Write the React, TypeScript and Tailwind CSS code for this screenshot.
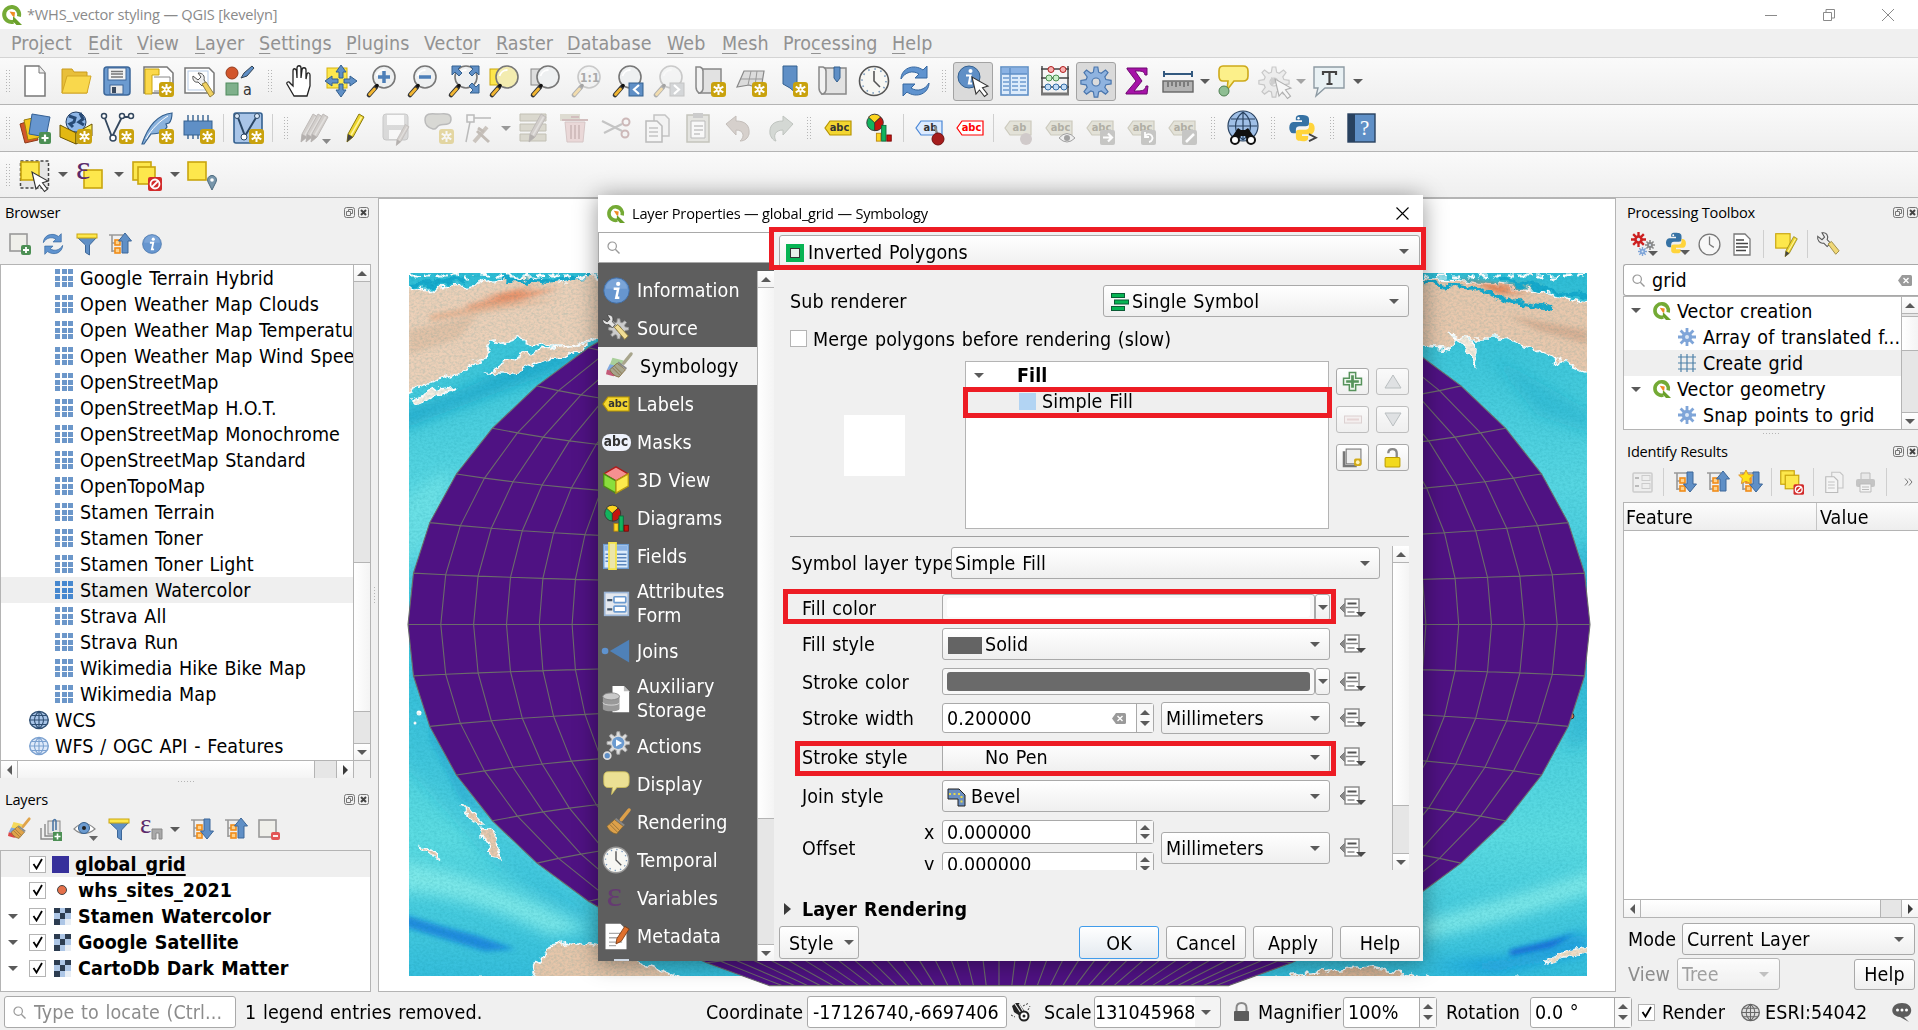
import React from "react";

type Kids = { children?: React.ReactNode };

/* ---------- icon primitives ---------- */

function Svg({ children, s = "size-8", vb = "0 0 32 32" }: Kids & { s?: string; vb?: string }) {
  return (
    <svg viewBox={vb} className={`${s} shrink-0 overflow-visible`} fill="none">
      {children}
    </svg>
  );
}

const NewBadge = ({ x = 17, y = 17 }: { x?: number; y?: number }) => (
  <g transform={`translate(${x} ${y})`}>
    <rect width="15" height="15" rx="3" fill="#c9a20e" />
    <path d="M7.5 2v11M2.7 4.7l9.6 5.6M12.3 4.7l-9.6 5.6" stroke="#fff" strokeWidth="2" />
    <circle cx="7.5" cy="7.5" r="2.4" fill="#fff" />
    <circle cx="7.5" cy="7.5" r="1" fill="#c9a20e" />
  </g>
);
const Cursor = ({ x = 14, y = 12 }: { x?: number; y?: number }) => (
  <path transform={`translate(${x} ${y})`} d="M0 0l4 17 3.5-4 5 6.5 3-2.4-5-6.3 5.5-1.8z" fill="#fff" stroke="#333" strokeWidth="1.1" />
);
const Lens = ({ gray = false, tint = "#eef0f1" }: { gray?: boolean; tint?: string }) => (
  <g opacity={gray ? 0.35 : 1}>
    <path d="M10 22l-7 8" stroke="#333" strokeWidth="4.6" strokeLinecap="round" />
    <path d="M8.5 24l-5 5.500" stroke="#f2b632" strokeWidth="2.8" strokeLinecap="round" />
    <circle cx="18" cy="12" r="11" fill={tint} stroke="#777" strokeWidth="1.6" />
    <path d="M10.5 11a8 8 0 0 1 8-6" stroke="#fff" strokeWidth="1.8" />
    <circle cx="11" cy="20.500" r="1.800" fill="#111" />
  </g>
);

const gearPath =
  "M14.2 2h3.6l.8 5.200 2.600 1.100 4.300-3.200 2.500 2.500-3.200 4.300 1.100 2.600 5.200.8v3.600l-5.200.8-1.100 2.600 3.200 4.300-2.500 2.500-4.300-3.200-2.600 1.100-.8 5.200h-3.600l-.8-5.200-2.600-1.100-4.300 3.200L4 26.700l3.200-4.300-1.100-2.600L.9 19v-3.600l5.200-.8L7.200 12 4 7.600l2.500-2.500 4.300 3.200 2.600-1.100z";

const Gear = ({ fill = "#8fb3df", stroke = "#4a76ad", hole = "#dcdcdc" }) => (
  <>
    <path d={gearPath} fill={fill} stroke={stroke} strokeWidth="1.2" />
    <circle cx="16" cy="17" r="4" fill={hole} stroke={stroke} strokeWidth="1.2" />
  </>
);
const Spiky = ({ fill = "#7fa5d8", s = "size-[18px]" }) => (
  <Svg s={s} vb="0 0 18 18">
    <g stroke={fill} strokeWidth="2.8">
      <path d="M9 0v18M0 9h18M2.6 2.6l12.8 12.8M15.4 2.6L2.6 15.4" />
    </g>
    <circle cx="9" cy="9" r="5.2" fill={fill} />
    <circle cx="9" cy="9" r="2" fill="#dce8f6" />
  </Svg>
);

const QLogo = ({ s = "size-5" }) => (
  <Svg s={s} vb="0 0 20 20">
    <path d="M11.500 16.800A7.500 7.500 0 1 1 16.900 11.500" stroke="#74aa35" strokeWidth="4" />
    <path d="M11 11l9 9h-5.500l-3.500-3.500z" fill="#6aa02a" />
    <path d="M7.500 6.500l5.500.8-.6 5-2-1.500z" fill="#f08a24" />
  </Svg>
);
const Tag = ({ fill = "#f3d631", stroke = "#b79500", color = "#333", text = "abc" }) => (
  <span className="relative flex h-4 w-7 shrink-0 items-center justify-center">
    <svg viewBox="0 0 28 16" className="absolute inset-0 h-full w-full" preserveAspectRatio="none">
      <path d="M6 1h21v14H6L1 8z" fill={fill} stroke={stroke} strokeWidth="1.2" />
    </svg>
    <span className="relative pb-px pl-1 text-[11px] leading-none font-bold tracking-normal" style={{ color }}>{text}</span>
  </span>
);
const Yellow = ({ x = 3, y = 3, w = 18 }) => <rect x={x} y={y} width={w} height={w} fill="#fde74c" stroke="#c9a50e" strokeWidth="1.6" />;
const Refresh = ({ s = "size-8" }) => (
  <Svg s={s}>
    <path d="M2 14C2 4 14-2 24 5l4-4v12H16l4-4C14 5 6 7 2 14z" fill="#5f93cf" stroke="#3567a0" />
    <path d="M30 18C30 28 18 34 8 27l-4 4V19h12l-4 4c6 4 14 2 18-5z" fill="#5f93cf" stroke="#3567a0" />
  </Svg>
);
const Clock = ({ s = "size-8", dark = true }) => (
  <Svg s={s}>
    <circle cx="16" cy="16" r="14.500" fill="#f7f7f3" stroke={dark ? "#555" : "#999"} strokeWidth="1.6" />
    <circle cx="16" cy="16" r="12" stroke="#7899bd" strokeWidth="1.6" strokeDasharray="1.500 4.780" />
    <path d="M16 6v10l6 6" stroke="#555" strokeWidth="1.6" />
  </Svg>
);
const Funnel = () => (
  <Svg s="size-[22px]" vb="0 0 22 22">
    <path d="M1 4h20l-7.5 8v10l-4-2.500v-7.500z" fill="#5f8fc6" stroke="#3c6799" />
    <rect x="1" y="1" width="20" height="4" fill="#fde74c" stroke="#c9a50e" />
  </Svg>
);
const TreeArrow = ({ up = false, star = false }) => (
  <Svg s="size-[24px]" vb="0 0 24 24">
    <path d="M1 3h14M4 3v17M4 11h4M4 19h4" stroke="#999" strokeWidth="1.6" />
    <rect x="7" y="8" width="5" height="5" fill="#ffd28a" stroke="#f08c1a" strokeWidth="1.6" />
    <rect x="7" y="16" width="5" height="5" fill="#ffd28a" stroke="#f08c1a" strokeWidth="1.6" />
    <path d={up ? "M17 1l6.500 8h-3.500v12h-6V9h-3.500z" : "M17 22l6.500-8h-3.500V2h-6v12h-3.500z"} fill="#5f8fc6" stroke="#3c6799" />
    {star && <path d="M7 0l2.3 4.500 5 .6-3.600 3.500.9 5L7 11.300l-4.600 2.300.9-5L-.3 5.100l5-.6z" fill="#ffe11a" stroke="#e0962a" />}
  </Svg>
);
const Info = ({ s = "size-6" }) => (
  <Svg s={s} vb="0 0 24 24">
    <circle cx="12" cy="12" r="11.300" fill="#6796cf" stroke="#3f6ca3" strokeWidth=".8" />
    <path d="M2.500 10.500a9.500 9 0 0 1 19 0z" fill="#8fb4e2" opacity=".5" />
    <circle cx="13.5" cy="6.2" r="1.900" fill="#fff" />
    <path d="M9.5 10.5h4L11.800 18.5h2.700" stroke="#fff" strokeWidth="2.2" />
  </Svg>
);
const Pencil = ({ gray = false, x = 0 }: { gray?: boolean; x?: number }) => (
  <g transform={`translate(${x} 0)`}>
    <path d="M8 22L19 2l5 3-11 20-6 5z" fill={gray ? "#d2cecb" : "#ecd52e"} stroke={gray ? "#bfbbb9" : "#8b7a12"} />
    <path d="M8 22l5 3-6 5z" fill={gray ? "#b4b0ae" : "#444"} />
    <path d="M11 23L21.5 5" stroke={gray ? "#e2e0de" : "#fff3a0"} strokeWidth="1.5" />
  </g>
);
const Python = ({ s = "size-8", prompt = false }: { s?: string; prompt?: boolean }) => (
  <Svg s={s}>
    <path d="M15 1c-7 0-6 3-6 6h7v2H6c-6 0-6 13 0 13h3v-4c0-3 2-4 4-4h7c3 0 4-1 4-4V6c0-4-3-5-9-5z" fill="#3672a4" />
    <path d="M17 31c7 0 6-3 6-6h-7v-2h10c6 0 6-13 0-13h-2v4c0 3-2 4-4 4h-7c-3 0-4 1-4 4v4c0 4 2 5 8 5z" fill="#ffd43b" />
    <circle cx="12" cy="4.800" r="1.4" fill="#fff" />
    {prompt && <path d="M24 23l8 4-8 4" stroke="#444" strokeWidth="2" fill="none" />}
  </Svg>
);
const Diagram = ({ s = "size-8" }) => (
  <Svg s={s}>
    <circle cx="11" cy="10" r="9" fill="#12b35e" stroke="#333" />
    <path d="M11 10L4 3.5a9 9 0 0 1 14 0z" fill="#fcd520" stroke="#333" />
    <path d="M11 10l7-6.5A9 9 0 0 1 11 19z" fill="#c4150e" stroke="#333" />
    <rect x="13" y="22" width="5" height="9" fill="#fcd520" stroke="#b8860b" />
    <rect x="19" y="13" width="5" height="18" fill="#12b35e" stroke="#0a6636" />
    <rect x="25" y="24" width="5" height="7" fill="#c4150e" stroke="#700" />
  </Svg>
);
const Globe = ({ s = "size-[20px]", fill = "#a9c5e8", stroke = "#2f4f73" }) => (
  <Svg s={s} vb="0 0 20 20">
    <ellipse cx="10" cy="10" rx="9.3" ry="8.5" fill={fill} stroke={stroke} strokeWidth="1.4" />
    <path d="M10 1.5v17M1 10h18M3 5.5h14M3 14.5h14M10 1.5c-6 5-6 12 0 17M10 1.5c6 5 6 12 0 17" stroke={stroke} strokeWidth="1.1" />
  </Svg>
);
const SearchIcon = () => (
  <Svg s="size-[13px]" vb="0 0 13 13">
    <circle cx="5.2" cy="5.2" r="4.2" stroke="#999" strokeWidth="1.2" />
    <path d="M8.3 8.3l4.2 4.2" stroke="#999" strokeWidth="1.4" />
  </Svg>
);
const ClearX = () => (
  <Svg s="h-[11px] w-[14px]" vb="0 0 14 11">
    <path d="M4 0h8.500q1.500 0 1.500 1.500v8q0 1.500-1.500 1.500H4L0 5.500z" fill="#9a9a9a" />
    <path d="M5.5 3l5 5M10.5 3l-5 5" stroke="#fff" strokeWidth="1.4" />
  </Svg>
);
const Brush = ({ s = "size-7", wood = "#e0a44a", patch = true }) => (
  <Svg s={s} vb="0 0 28 28">
    {patch && (
      <>
        <path d="M7 5l12 3-4 8-11-3z" fill={wood === "#e0a44a" ? "#f5d85a" : "#a9cf9a"} />
        <path d="M4 12l8 2-3 6-8-2z" fill="#7fa8e0" />
        <path d="M1 18l9 2 6 3-8 2-8-2z" fill={wood === "#e0a44a" ? "#dd4646" : "#c45a78"} />
      </>
    )}
    <path d="M27 1l-8 10" stroke={wood} strokeWidth="3.600" strokeLinecap="round" />
    <path d="M12 11l9 7-7 8c-5-1-8-4-10-8z" fill={wood} stroke="#7c6334" strokeWidth=".8" />
    <path d="M9 14l8 8M7 16l8 8" stroke="#7c6334" strokeWidth=".7" />
    <path d="M13 10l9 7" stroke="#888" strokeWidth="2" />
  </Svg>
);
const Wrench = ({ s = "size-7" }) => (
  <Svg s={s} vb="0 0 28 28">
    <path d="M2 5l5 4 3-3-3-5c5-1 8 3 6 8l4 4-4 4-4-4C5 14 1 10 2 5z" fill="#eee" stroke="#555" strokeWidth="1.2" />
    <path d="M14 14l4-3 9 11-4 4z" fill="#f0d878" stroke="#94823d" />
  </Svg>
);

const ic = {
  newFile: <Svg><path d="M6 1h14l6 7v23H6z" fill="#fff" stroke="#777" strokeWidth="1.5" /><path d="M20 1v7h6" stroke="#777" fill="#eee" /></Svg>,
  open: <Svg><path d="M2 4h10l2 3h13v21H2z" fill="#e8bf3a" stroke="#c99b1c" /><path d="M7 11h24l-4 17H2z" fill="#f9d84c" stroke="#d3a724" /></Svg>,
  save: <Svg><rect x="3" y="2" width="26" height="28" rx="3" fill="#6c9bd0" stroke="#3c6799" strokeWidth="1.5" /><rect x="7" y="3" width="18" height="12" fill="#f4f4f4" stroke="#3c6799" /><path d="M10 6.5h12M10 9h12M10 12h12" stroke="#777" strokeWidth="1.4" /><rect x="9" y="20" width="13" height="9" fill="#e8e8e8" stroke="#3c6799" /><rect x="11" y="22" width="4" height="6" fill="#3a4a60" /></Svg>,
  layout: <Svg><path d="M2 2h23l6 6v20H2z" fill="#fff" stroke="#777" strokeWidth="1.5" /><path d="M3 4h14v6H10v19H3z" fill="#fbd84b" stroke="#c9a50e" /><path d="M12 12h16v14H12" stroke="#888" /><NewBadge /></Svg>,
  wrenchDoc: <Svg><path d="M2 3h24l5 5v20H2z" fill="#fff" stroke="#777" strokeWidth="1.5" /><rect x="5" y="6" width="20" height="19" stroke="#b7cbe6" /><g transform="translate(8 6)"><path d="M2 5l5 4 3-3-3-4c5 0 7 3 6 7l2 3-4 3-4-4C4 12 1 9 2 5z" fill="#eee" stroke="#555" /><path d="M11 13l4-2 8 12-4 3z" fill="#f0d060" stroke="#94823d" /></g></Svg>,
  styleMgr: <Svg><circle cx="8" cy="8" r="6" fill="#d2562c" stroke="#963b1b" /><path d="M17 13l3-5 8-7 2 2-7 8z" fill="#5f8fc6" stroke="#345" /><rect x="2" y="18" width="12" height="12" fill="#7fb08b" stroke="#4f8a5c" /><text x="19" y="30" fontSize="16" fill="#333">a</text></Svg>,
  hand: <Svg><path d="M10 31L3 19c-1-2 2-3 3-1l3 3V6c0-3 3-3 3.5 0l.5 7V3c0-3 4-3 4 0v10l1-8c0-3 4-3 4 0v9l1-5c1-2 3-1 3 1v11l-3 10z" fill="#fff" stroke="#222" strokeWidth="1.3" /></Svg>,
  panSel: <Svg><rect x="2" y="3" width="20" height="20" fill="#fde74c" stroke="#d6b20e" /><g fill="#5f8fc6" stroke="#34608f"><path d="M16 0l5 7h-3v6h-4V7h-3zM16 32l5-7h-3v-6h-4v6h-3zM0 16l7-5v3h6v4H7v3zM32 16l-7-5v3h-6v4h6v3z" /></g></Svg>,
  zoomIn: <Svg><Lens /><path d="M18 6v12M12 12h12" stroke="#4d7fb8" strokeWidth="3.5" /></Svg>,
  zoomOut: <Svg><Lens /><path d="M12 12h12" stroke="#4d7fb8" strokeWidth="3.5" /></Svg>,
  zoomFull: <Svg><Lens /><path d="M4 1h9l-3 3 4 4-3 3-4-4-3 3zM31 1h-9l3 3-4 4 3 3 4-4 3 3zM31 28h-9l3-3-4-4 3-3 4 4 3-3z" fill="#5f8fc6" stroke="#34608f" /></Svg>,
  zoomSel: <Svg><rect x="1" y="4" width="16" height="16" fill="#fde74c" stroke="#c9a50e" /><Lens tint="#f3ecb0" /></Svg>,
  zoomLayer: <Svg><rect x="1" y="4" width="16" height="16" fill="#ddd" stroke="#888" /><Lens /></Svg>,
  zoom11: <Svg><Lens gray /><text x="9" y="17" fontSize="12" fontWeight="bold" fill="#aaa">1:1</text></Svg>,
  zoomPrev: <Svg><Lens /><rect x="17" y="18" width="14" height="13" fill="#5f8fc6" stroke="#34608f" /><path d="M27 20l-5 4.500 5 4.500" stroke="#fff" strokeWidth="2.2" /></Svg>,
  zoomNext: <Svg><Lens gray /><rect x="17" y="18" width="14" height="13" fill="#d4d6d8" stroke="#c4c4c4" /><path d="M21 20l5 4.500-5 4.500" stroke="#fff" strokeWidth="2.2" /></Svg>,
  newMap: <Svg><path d="M8 4h19v24H4q3-1 3-4z" fill="#e2e2e2" stroke="#888" strokeWidth="1.5" /><path d="M2 2h4q3 1 3 4v18q-1 4-4 4-3-2-3-6z" fill="#f2f2f2" stroke="#888" strokeWidth="1.5" /><NewBadge /></Svg>,
  new3d: <Svg><path d="M2 22L9 6h20l-3 18-12-4z" fill="#dcdcdc" stroke="#888" strokeWidth="1.2" /><path d="M6 14h21M16 6l-3 14M22 6l-2 15" stroke="#999" /><NewBadge /></Svg>,
  bookmarkNew: <Svg><path d="M7 1h14v28l-7-6-7-4z" fill="#5f8fc6" stroke="#34608f" /><NewBadge /></Svg>,
  bookmarks: <Svg><path d="M8 3h21v26H4q3-1 3-4z" fill="#e2e2e2" stroke="#888" strokeWidth="1.5" /><path d="M2 2h4q3 1 3 4v19q-1 4-4 4-3-2-3-6z" fill="#f2f2f2" stroke="#888" strokeWidth="1.5" /><path d="M17 2h6v11l-3 4-3-4z" fill="#5f8fc6" stroke="#34608f" /></Svg>,
  clock: <Clock />,
  refresh: <Refresh />,
  identify: <Svg><circle cx="12" cy="12" r="11" fill="#5f8fc6" stroke="#34608f" /><circle cx="13.5" cy="6" r="2" fill="#fff" /><path d="M9 10.5h4.5L12 18.5h3" stroke="#fff" strokeWidth="2.2" /><Cursor x={15} y={12} /></Svg>,
  table: <Svg><rect x="3" y="2" width="27" height="28" fill="#dcebfb" stroke="#5f8fc6" strokeWidth="1.6" /><rect x="4" y="3" width="25" height="6" fill="#8ab2e4" /><path d="M4 9h25M12 3v26" stroke="#5f8fc6" strokeWidth="1.4" /><path d="M5 13h6M5 17h6M5 21h6M5 25h6M14 13h6M14 17h6M14 21h6M14 25h6M22 13h6M22 17h6M22 21h6M22 25h6" stroke="#6c9bd0" strokeWidth="1.6" /></Svg>,
  calc: <Svg><path d="M3 1v28M29 1v28M2 4h28M2 13h28M2 22h28" stroke="#444" strokeWidth="1.4" /><path d="M2 29h28" stroke="#777" strokeWidth="3" /><g stroke="#b02020" fill="#f9b0b0"><circle cx="12" cy="4.5" r="3" /><circle cx="24" cy="4.5" r="3" /></g><g stroke="#4c9050" fill="#c9f0c9"><circle cx="10" cy="13" r="3" /><circle cx="17" cy="13" r="3" /></g><g stroke="#346fa8" fill="#c3dcf5"><circle cx="9" cy="22" r="3" /><circle cx="17" cy="22" r="3" /><circle cx="25" cy="22" r="3" /></g></Svg>,
  gear: <Svg><Gear /></Svg>,
  sigma: <Svg><path d="M6 3h20v7h-2c-1-4-3-4-10-4l7 10-8 10c8 0 11 0 12-5h2l-1 8H5v-1l10-12L6 4z" fill="#a612a8" stroke="#6e0b70" /></Svg>,
  measure: <Svg><path d="M2 9h28M2 6v6M30 6v6" stroke="#33597f" strokeWidth="2" /><rect x="1" y="16" width="30" height="11" fill="#b4b4b4" stroke="#666" strokeWidth="1.4" /><path d="M6 17v5M10 17v4M14 17v5M18 17v4M22 17v5M26 17v4" stroke="#444" /></Svg>,
  tips: <Svg><path d="M6 1h20q5 0 5 5v5q0 5-5 5h-9l-7 9 1-9H6q-4 0-4-5V6q0-5 4-5z" fill="#fcf08a" stroke="#cda91a" strokeWidth="1.6" /><circle cx="7" cy="26" r="5" fill="#8fbe93" stroke="#4d7f50" /></Svg>,
  gearOff: <Svg><g opacity=".35"><Gear fill="#ddd" stroke="#777" hole="#eee" /><path d="M13 12l8 4-8 5z" fill="#888" /><Cursor x={17} y={14} /></g></Svg>,
  textAnn: <Svg><path d="M1 2h30v21H12l-9 8 2-8H1z" fill="#e9f1f4" stroke="#8d9aa3" strokeWidth="1.4" /><path d="M10 10V7h13v3M16.5 7v12M13.500 19h6" stroke="#444" strokeWidth="2.2" /></Svg>,

  dsm: <Svg><path d="M1 12l12-4 6 20-13 3z" fill="#d2562c" stroke="#8e3a17" /><path d="M5 8l13-3 5 20-14 3z" fill="#f3c71d" stroke="#9b7e0c" /><path d="M13 2l18 3-4 20-17-3z" fill="#6796cf" stroke="#335f94" /><rect x="20" y="20" width="12" height="12" rx="2" fill="#4c8f54" /><path d="M26 22.5v7M22.5 26h7" stroke="#fff" strokeWidth="2.2" /></Svg>,
  gpkg: <Svg><circle cx="16" cy="10" r="10" fill="#8fb7e8" stroke="#1f3c63" /><path d="M9 4l6 2-1 4-4 2 3 3M20 1l3 6-4 3 5 3" stroke="#274a75" strokeWidth="3" /><path d="M0 13l16 8v11L0 25z" fill="#e3b813" stroke="#6d5500" /><path d="M32 12l-16 9v11l16-8z" fill="#fcee57" stroke="#6d5500" /><NewBadge /></Svg>,
  shp: <Svg><path d="M3 4l8 21 10-20h10" stroke="#33475e" strokeWidth="1.8" /><g fill="#fff" stroke="#33475e" strokeWidth="1.5"><circle cx="3" cy="4" r="2.5" /><circle cx="12" cy="26" r="3" /><circle cx="21" cy="4" r="2.5" /><circle cx="30" cy="4" r="2.5" /></g><NewBadge x={18} /></Svg>,
  feather: <Svg><path d="M0 32C4 20 12 3 30 1c0 6-1 8-3 10l-3 1 1 3c-2 4-8 7-16 7L2 32z" fill="#8ab2dd" stroke="#34608f" strokeWidth="1.2" /><path d="M4 27C10 16 18 9 26 4" stroke="#fff" /><NewBadge /></Svg>,
  chip: <Svg><path d="M5 3v24M10 3v24M15 3v24M20 3v24M25 3v24" stroke="#34608f" strokeWidth="1.4" /><rect x="1" y="9" width="28" height="14" fill="#5f8fc6" stroke="#34608f" /><NewBadge /></Svg>,
  mesh: <Svg><rect x="2" y="1" width="28" height="30" rx="2" fill="#a9c5e8" stroke="#34608f" strokeWidth="1.6" /><path d="M5 3l8 21 12-20" stroke="#2b4766" strokeWidth="2" /><circle cx="5" cy="4" r="2.5" fill="#dbe9f8" stroke="#2b4766" /><circle cx="25" cy="4" r="2.5" fill="#dbe9f8" stroke="#2b4766" /><circle cx="12" cy="25" r="3" fill="#fff" stroke="#2b4766" /><NewBadge /></Svg>,
  pencils: <Svg><Pencil gray x={-5} /><Pencil gray x={0} /><Pencil gray x={5} /><path d="M23 27h9l-4.500 5z" fill="#888" /></Svg>,
  pencil: <Svg><Pencil /></Svg>,
  saveOff: <Svg><g opacity=".35"><rect x="2" y="2" width="25" height="26" rx="3" fill="#aaa" stroke="#777" /><rect x="6" y="3" width="17" height="10" fill="#fff" /><rect x="8" y="18" width="12" height="9" fill="#fff" /></g><g transform="translate(10 11) scale(.75)"><Pencil gray /></g></Svg>,
  polyOff: <Svg><path d="M3 8c0-8 8-6 13-6s13-2 13 5-7 5-11 6-3 5-7 4-8-4-8-9z" fill="#d8d8d4" stroke="#bbb" strokeWidth="1.5" /><g opacity=".35"><NewBadge /></g></Svg>,
  vertexOff: <Svg><path d="M4 3h7v7H4zM11 6h17M7 10L3 30" stroke="#bbb" strokeWidth="1.5" /><path d="M11 30L24 15" stroke="#cbc5bf" strokeWidth="4" /><path d="M14 19l12 11M15 16l6 4" stroke="#c2bcb6" strokeWidth="3" /></Svg>,
  multiOff: <Svg><path d="M2 2h26v7H2zM2 12h26v7H2zM2 22h26v7H2z" fill="#dad8ce" stroke="#c2c0b4" /><Pencil gray x={4} /></Svg>,
  trash: <Svg><path d="M1 2h20v7H1z" fill="#dedcd2" /><path d="M6 10h20l-2 20H8z" fill="#ead8d8" stroke="#d6c6c6" /><path d="M3 8h26M12 5h8M12 13v14M16 13v14M20 13v14" stroke="#d2bebe" strokeWidth="2" /></Svg>,
  cut: <Svg><path d="M2 9l20 10M4 21l18-9" stroke="#c4c4c4" strokeWidth="2.2" /><circle cx="26" cy="10" r="3.5" stroke="#ccb8b8" strokeWidth="2" /><circle cx="25" cy="22" r="3.5" stroke="#ccb8b8" strokeWidth="2" /></Svg>,
  copy: <Svg><path d="M13 3h11l4 4v17H13z" fill="#f2f2f2" stroke="#c4c4c4" strokeWidth="1.5" /><path d="M5 9h11l5 5v16H5z" fill="#f5f5f5" stroke="#bbb" strokeWidth="1.5" /><path d="M8 16h9M8 20h9M8 24h9" stroke="#c4c4c4" strokeWidth="1.6" /></Svg>,
  paste: <Svg><rect x="5" y="3" width="22" height="27" fill="#e4e4e0" stroke="#c4c4bc" strokeWidth="1.5" /><rect x="11" y="1" width="10" height="5" fill="#ccc" /><path d="M9 9h14v17H9z" fill="#f8f8f8" stroke="#bbb" /><path d="M12 14h9M12 18h9M12 22h6" stroke="#c4c4c4" strokeWidth="1.6" /></Svg>,
  undo: <Svg><path d="M3 12l10-8v5c9 0 14 4 13 13-1 4-4 7-9 7 5-4 4-11-4-11v5z" fill="#d6d0cc" stroke="#c4beba" /></Svg>,
  redo: <Svg><path d="M29 12L19 4v5C10 9 5 13 6 22c1 4 4 7 6 7-3-5-1-11 7-11v5z" fill="#d4d8d4" stroke="#bfc4bf" /></Svg>,
  tag: <Tag />,
  diagram: <Diagram s="size-7" />,
  tagPin: <span className="relative"><Tag fill="#dcebff" stroke="#4a87d6" text="ab" /><svg viewBox="0 0 14 22" className="absolute top-1 left-4 h-[22px] w-[14px]"><path d="M7 14L4 2" stroke="#888" strokeWidth="2.5" /><circle cx="7" cy="15" r="6" fill="#a51c1c" stroke="#701010" /></svg></span>,
  tagRed: <Tag fill="#fff" stroke="#f00" color="#f00" />,
  metasearch: <Svg><circle cx="16" cy="14" r="15" fill="#9fbfe6" stroke="#28415f" strokeWidth="1.2" /><path d="M16 0v28M2 14h28M4 7h24M16 0C6 8 6 20 16 28M16 0c10 8 10 20 0 28" stroke="#28415f" strokeWidth="1.2" /><path d="M11 16l3 2h4l3-2 8 12-7 2-4-6h-4l-4 6-7-2z" fill="#111" /><circle cx="8" cy="28" r="4" fill="#fff" stroke="#111" strokeWidth="2" /><circle cx="24" cy="28" r="4" fill="#fff" stroke="#111" strokeWidth="2" /></Svg>,
  help: <Svg><rect x="3" y="2" width="27" height="28" fill="#5f8fc6" stroke="#28415f" strokeWidth="1.4" /><rect x="3" y="2" width="7" height="28" fill="#28415f" /><text x="15" y="23" fontSize="21" fill="#fff" fontFamily="Liberation Serif">?</text></Svg>,

  select: <Svg><rect x="1.5" y="2" width="28" height="27" fill="#e6e6e6" stroke="#444" strokeWidth="1.5" strokeDasharray="3 2" /><Yellow x={2} y={3} w={18} /><Cursor x={13} y={13} /></Svg>,
  selExpr: <Svg><Yellow x={9} y={11} w={18} /><text x="1" y="20" fontSize="34" fill="#5b2a6b" fontFamily="Liberation Serif">ε</text></Svg>,
  deselect: <Svg><Yellow x={2} y={3} w={18} /><Yellow x={7} y={8} w={17} /><rect x="17" y="18" width="14" height="14" rx="2" fill="#d22b2b" /><circle cx="24" cy="25" r="4.5" stroke="#fff" strokeWidth="1.8" /><path d="M21 28l6-6" stroke="#fff" strokeWidth="1.8" /></Svg>,
  selLoc: <Svg><Yellow x={1} y={3} w={18} /><path d="M25 31l-4-8a4.5 4.5 0 1 1 8 0z" fill="#7896ab" stroke="#4d6b80" /><circle cx="25" cy="21" r="1.8" fill="#fff" /></Svg>,
};

const GrayTag = ({ kind }: { kind: number }) => (
  <span className="relative opacity-90">
    <Tag fill="#e2e1d6" stroke="#c8c6b8" color="#a9a79c" text={kind === 0 ? "ab" : "abc"} />
    <svg viewBox="0 0 16 16" className="absolute top-2.5 left-3.5 size-4" fill="none">
      {kind === 0 && <circle cx="8" cy="9" r="6" fill="#cdc6c6" />}
      {kind === 1 && <path d="M0 8q8-9 16 0-8 8-16 0z" fill="#eee" stroke="#999" />}
      {kind === 1 && <circle cx="8" cy="8" r="3" fill="#999" />}
      {kind > 1 && <rect width="15" height="15" rx="2" fill="#c2c2c0" />}
      {kind === 2 && <path d="M3 7.5h8M8 3.5l4 4-4 4" stroke="#fff" strokeWidth="2.2" />}
      {kind === 3 && <path d="M4 6a4 4 0 1 1 4 6M4 2v5h4" stroke="#fff" strokeWidth="1.8" />}
      {kind === 4 && <path d="M4 12l8-8" stroke="#fff" strokeWidth="2.5" />}
    </svg>
  </span>
);

/* ---------- toolbar parts ---------- */

const Handle = ({ w }: { w: string }) => (
  <div className={`${w} flex shrink-0 items-center justify-center`}>
    <div className="h-6 w-[5px] bg-[radial-gradient(circle,#b5b5b5_0.8px,transparent_1px)] bg-[size:3px_3px]" />
  </div>
);
const Sep = ({ w }: { w: string }) => (
  <div className={`${w} flex shrink-0 justify-center`}>
    <div className="h-7 w-px bg-[#cfcfcf]" />
  </div>
);
const Ico = ({ children, on = false }: Kids & { on?: boolean }) => (
  <div className="flex w-[41px] shrink-0 justify-center">
    <div className={`flex h-[39px] w-10 items-center justify-center ${on ? "rounded-[3px] border border-[#a3a3a3] bg-[#dadada]" : ""}`}>{children}</div>
  </div>
);
const Down = ({ c = "border-t-[#5a5a5a]" }) => <i className={`block h-0 w-0 shrink-0 border-x-[5px] border-t-[5px] border-x-transparent ${c}`} />;
const Up = () => <i className="block h-0 w-0 shrink-0 border-x-[5px] border-b-[5px] border-x-transparent border-b-[#5a5a5a]" />;
const Left = () => <i className="block h-0 w-0 shrink-0 border-y-[5px] border-r-[5px] border-y-transparent border-r-[#5a5a5a]" />;
const Right = ({ big = false }) => <i className={`block h-0 w-0 shrink-0 border-y-transparent border-l-[#3a3a3a] ${big ? "border-y-[6px] border-l-[7px]" : "border-y-[5px] border-l-[5px]"}`} />;
const Drop = ({ w = "w-[14px]", c }: { w?: string; c?: string }) => (
  <div className={`${w} flex shrink-0 justify-center`}><Down c={c} /></div>
);
const bar = "flex shrink-0 items-center border-b border-[#b4b4b4] bg-linear-to-b from-[#fafafa] to-[#efefef]";

/* ---------- docks ---------- */

const DockTitle = ({ children, cls = "" }: Kids & { cls?: string }) => (
  <div className={`flex shrink-0 items-center justify-between font-['Open_Sans'] text-[14.6px] tracking-[-0.2px] [font-stretch:normal] [word-spacing:0] ${cls}`}>
    <span>{children}</span>
    <svg viewBox="0 0 25 11" className="h-[11px] w-[25px]" fill="none" stroke="#777">
      <rect x=".5" y=".5" width="10" height="10" rx="2" />
      <path d="M4.5 4.5V2.5h4v4h-2M2.5 4.5h4v4h-4z" />
      <rect x="14.5" y=".5" width="10" height="10" rx="2" />
      <path d="M17 3l5 5M22 3l-5 5" stroke="#444" strokeWidth="2" />
    </svg>
  </div>
);
const btn = "flex shrink-0 items-center justify-center border-[#b4b4b4] bg-linear-to-b from-white to-[#f3f3f3]";

function VScroll({ thumb, after, track = "h-0" }: { thumb: string; after: string; track?: string }) {
  return (
    <div className="flex w-[17px] shrink-0 flex-col border-l border-[#b4b4b4] bg-[#e6e6e6]">
      <div className={`${btn} h-[17px] border-b`}><Up /></div>
      <div className={track} />
      <div className={`${thumb} shrink-0 border-b border-[#b4b4b4] bg-linear-to-r from-white to-[#f4f4f4]`} />
      <div className={after} />
      <div className={`${btn} h-[17px] border-t`}><Down /></div>
    </div>
  );
}
function HScroll({ gap, corner = true }: { gap: string; corner?: boolean }) {
  return (
    <div className="flex h-[18px] shrink-0 border-t border-[#b4b4b4] bg-[#e6e6e6]">
      <div className={`${btn} w-[17px] border-r`}><Left /></div>
      <div className="grow border-r border-[#b4b4b4] bg-linear-to-b from-white to-[#f4f4f4]" />
      <div className={gap} />
      <div className={`${btn} w-[17px] border-l`}><Right /></div>
      {corner && <div className="w-[17px] border-l border-[#b4b4b4] bg-[#f0f0f0]" />}
    </div>
  );
}

const browserItems = [
  "Google Terrain Hybrid", "Open Weather Map Clouds", "Open Weather Map Temperatu", "Open Weather Map Wind Spee", "OpenStreetMap",
  "OpenStreetMap H.O.T.", "OpenStreetMap Monochrome", "OpenStreetMap Standard", "OpenTopoMap", "Stamen Terrain", "Stamen Toner",
  "Stamen Toner Light", "Stamen Watercolor", "Strava All", "Strava Run", "Wikimedia Hike Bike Map", "Wikimedia Map",
];
const Nine = ({ hot }: { hot: boolean }) => (
  <div className="grid size-[18px] shrink-0 grid-cols-3 gap-[1.5px]">
    {Array.from({ length: 9 }, (_, i) => <i key={i} className={hot ? "bg-[#4788cf]" : "bg-[#6c97ca]"} />)}
  </div>
);
const Check = ({ on = true }) => (
  <div className="flex size-[17px] shrink-0 items-center justify-center border border-[#b4b4b4] bg-white">
    {on && <svg viewBox="0 0 12 12" className="size-3" fill="none"><path d="M1.500 6l3 4.500L10 1" stroke="#000" strokeWidth="1.8" /></svg>}
  </div>
);
const Checker = () => (
  <div className="grid size-[17px] shrink-0 grid-cols-3">
    {["d", "l", "d", "l", "d", "l", "d", "l", "w"].map((c, i) => (
      <i key={i} className={c === "d" ? "bg-[#2c3c50]" : c === "l" ? "bg-[#adc6e6]" : "bg-[#e8eef5]"} />
    ))}
  </div>
);
const DotsH = () => <div className="h-[3px] w-[18px] bg-[radial-gradient(circle,#b5b5b5_0.8px,transparent_1px)] bg-[size:3px_3px]" />;

function LeftDock() {
  return (
    <div className="flex w-[371px] shrink-0 flex-col">
      <DockTitle cls="h-[29px] pl-[5px] pr-[2px]">Browser</DockTitle>
      <div className="mb-[3px] flex h-[34px] shrink-0 items-center gap-[10px] pl-[8px]">
        <Svg s="size-[24px]" vb="0 0 24 24"><rect x="2" y="2" width="17" height="17" fill="#efefea" stroke="#999" strokeWidth="1.6" /><rect x="13" y="13" width="10" height="10" rx="2" fill="#4c8f54" /><path d="M18 15v6M15 18h6" stroke="#fff" strokeWidth="1.8" /></Svg>
        <Refresh s="size-[22px]" /><span className="pl-[2px]"><Funnel /></span><TreeArrow up /><Info s="size-[20px]" />
      </div>
      <div className="flex h-[514px] shrink-0 flex-col border border-[#b4b4b4] bg-white">
        <div className="flex h-[495px] shrink-0">
          <div className="min-w-0 grow overflow-hidden">
            {browserItems.map((t, i) => (
              <div key={t} className={`flex h-[26px] items-center pl-[54px] whitespace-nowrap ${i === 12 ? "bg-[#efefef]" : ""}`}>
                <Nine hot={i === 12} /><span className="pt-[2px] pl-[7px]">{t}</span>
              </div>
            ))}
            <div className="flex h-[26px] items-center gap-[6px] pl-[28px]"><Globe /><span className="pt-[2px]">WCS</span></div>
            <div className="flex h-[26px] items-center gap-[6px] pl-[28px]"><Globe fill="#dfeafa" stroke="#7ba1d0" /><span className="pt-[2px]">WFS / OGC API - Features</span></div>
          </div>
          <VScroll track="h-[281px] border-b border-[#b4b4b4]" thumb="h-[149px]" after="grow" />
        </div>
        <HScroll gap="w-[21px]" />
      </div>
      <div className="flex h-[5px] shrink-0 items-end justify-center"><DotsH /></div>
      <DockTitle cls="mt-[3px] h-[26px] pl-[5px] pr-[2px]">Layers</DockTitle>
      <div className="mb-[4px] flex h-[34px] shrink-0 items-center gap-[10px] pl-[8px]">
        <Brush s="size-[22px]" />
        <Svg s="size-[23px]" vb="0 0 23 23"><path d="M1 10v11h14M5 6v12h12" stroke="#888" strokeWidth="1.4" /><rect x="8" y="3" width="12" height="13" fill="#e5e5e5" stroke="#888" /><path d="M13 13V3q2-3 3 0v9" stroke="#4d77a5" strokeWidth="1.6" /><rect x="13" y="14" width="9" height="9" fill="#4c8f54" /><path d="M17.5 15.5v6M14.5 18.5h6" stroke="#fff" strokeWidth="1.6" /></Svg>
        <Svg s="size-[25px]" vb="0 0 25 25"><path d="M1 12Q11 1 22 12 11 21 1 12z" fill="#fff" stroke="#888" strokeWidth="1.2" /><circle cx="11" cy="11" r="5.5" fill="#6c9bd0" stroke="#34608f" /><circle cx="11" cy="11" r="2" fill="#222" /><path d="M16 19h9l-4.500 5z" fill="#666" /></Svg>
        <Funnel />
        <Svg s="size-[24px]" vb="0 0 24 24"><text x="0" y="16" fontSize="27" fill="#5b2a6b" fontFamily="Liberation Serif">ε</text><path d="M12 22V12h10v10h-3v-6h-3v6z" fill="#a9a9a9" stroke="#888" /></Svg>
        <span className="-ml-1"><Down /></span>
        <span><TreeArrow /></span><TreeArrow up />
        <Svg s="size-[23px]" vb="0 0 23 23"><rect x="1" y="2" width="17" height="17" fill="#efefea" stroke="#999" strokeWidth="1.6" /><rect x="13" y="14" width="9" height="8" rx="2" fill="#e25555" /><path d="M15 18h5" stroke="#fff" strokeWidth="1.8" /></Svg>
      </div>
      <div className="flex h-[142px] shrink-0 flex-col border border-[#b4b4b4] bg-white font-bold">
        <div className="flex h-[26px] shrink-0 items-center bg-[#efefef] pl-[28px]"><Check /><i className="ml-[6px] size-[17px] bg-[#37309b]" /><span className="pt-[2px] pl-[6px]"><span className="underline decoration-2 underline-offset-[3px]">global_grid</span></span></div>
        <div className="flex h-[26px] shrink-0 items-center pl-[28px]"><Check /><i className="mr-[11px] ml-[11px] size-[10px] rounded-full border border-[#444] bg-[#e5704a]" /><span className="pt-[2px]">whs_sites_2021</span></div>
        {["Stamen Watercolor", "Google Satellite", "CartoDb Dark Matter"].map((t) => (
          <div key={t} className="flex h-[26px] shrink-0 items-center"><span className="w-[28px] pl-[7px]"><Down /></span><Check /><span className="pr-[7px] pl-[8px]"><Checker /></span><span className="pt-[2px]">{t}</span></div>
        ))}
      </div>
    </div>
  );
}

const rtool = "flex shrink-0 items-center";
function RightDock() {
  return (
    <div className="flex w-[295px] shrink-0 flex-col">
      <DockTitle cls="h-[29px] pl-[4px]">Processing Toolbox</DockTitle>
      <div className={`${rtool} mb-[3px] h-[34px] pl-[8px]`}>
        <span className="relative size-[25px]">
          <span className="absolute top-0 left-0"><Spiky fill="#cc2020" s="size-[15px]" /></span>
          <span className="absolute top-[8px] left-[14px]"><Spiky fill="#888" s="size-[10px]" /></span>
          <span className="absolute top-[15px] left-[7px]"><Spiky s="size-[9px]" /></span>
          <span className="absolute top-[19px] left-[17px]"><Down /></span>
        </span>
        <span className="relative ml-[9px] size-[24px]"><Python s="size-[22px]" /><span className="absolute top-[18px] left-[15px]"><Down /></span></span>
        <span className="ml-[9px]"><Svg s="size-[23px]"><circle cx="16" cy="16" r="14.5" fill="#f7f7f7" stroke="#777" strokeWidth="1.8" /><path d="M16 5v11l6 4" stroke="#777" strokeWidth="1.8" /></Svg></span>
        <span className="ml-[12px]"><Svg s="h-[23px] w-[18px]" vb="0 0 18 23"><path d="M1 1h11l5 5v16H1z" fill="#fff" stroke="#777" strokeWidth="1.3" /><path d="M3 7h8M3 10.5h12M3 14h12M3 17.5h10" stroke="#444" strokeWidth="1.5" /></Svg></span>
        <Sep w="w-[24px]" />
        <Svg s="size-[23px]"><Yellow x={1} y={1} w={20} /><g transform="translate(7 3)"><Pencil /></g></Svg>
        <Sep w="w-[18px]" />
        <Wrench s="size-[24px]" />
      </div>
      <div className="flex h-[32px] shrink-0 items-center rounded-l-[3px] border border-r-0 border-[#a9a9a9] bg-white pr-[6px] pl-[8px]"><SearchIcon /><span className="grow pt-[2px] pl-[7px]">grid</span><ClearX /></div>
      <div className="flex h-[134px] shrink-0 border border-r-0 border-[#b4b4b4] bg-white">
        <div className="min-w-0 grow overflow-hidden whitespace-nowrap">
          <div className="flex h-[27px] items-center gap-[6px] pl-[7px]"><Down /><span className="pl-[6px]"><QLogo s="size-[18px]" /></span><span className="pt-[2px]">Vector creation</span></div>
          <div className="flex h-[26px] items-center gap-[7px] pl-[54px]"><Spiky /><span className="pt-px">Array of translated f...</span></div>
          <div className="flex h-[26px] items-center gap-[7px] bg-[#efefef] pl-[54px]"><Svg s="size-[18px]" vb="0 0 18 18"><path d="M3 0v18M9 0v18M15 0v18M0 3h18M0 9h18M0 15h18" stroke="#4f81a8" strokeWidth="1.2" /></Svg><span className="pt-px">Create grid</span></div>
          <div className="flex h-[26px] items-center gap-[6px] pl-[7px]"><Down /><span className="pl-[6px]"><QLogo s="size-[18px]" /></span><span className="pt-px">Vector geometry</span></div>
          <div className="flex h-[26px] items-center gap-[7px] pl-[54px]"><Spiky /><span className="pt-px">Snap points to grid</span></div>
        </div>
        <VScroll track="h-[3px] border-b border-[#b4b4b4]" thumb="h-[34px]" after="grow" />
      </div>
      <div className="flex h-[5px] shrink-0 items-end justify-center"><DotsH /></div>
      <DockTitle cls="mt-px h-[30px] pl-[4px]">Identify Results</DockTitle>
      <div className={`${rtool} mb-[4px] h-[32px] pl-[9px]`}>
        <Svg s="size-[21px]" vb="0 0 21 21"><rect x="1" y="1" width="19" height="19" rx="1" fill="#eee" stroke="#ccc" strokeWidth="1.5" /><path d="M3 6h4M3 14h4" stroke="#bbb" strokeWidth="2" /><rect x="10" y="3.5" width="8" height="5" stroke="#ccc" /><rect x="10" y="11.5" width="8" height="5" stroke="#ccc" /></Svg>
        <Sep w="w-[20px]" />
        <TreeArrow /><span className="ml-[9px]"><TreeArrow up /></span><span className="ml-[9px]"><TreeArrow star /></span>
        <Sep w="w-[17px]" />
        <Svg s="size-[24px]"><Yellow x={1} y={1} w={18} /><Yellow x={7} y={7} w={18} /><rect x="18" y="19" width="14" height="14" rx="2" fill="#d22b2b" /><circle cx="25" cy="26" r="4.5" stroke="#fff" strokeWidth="1.8" /><path d="M22 29l6-6" stroke="#fff" strokeWidth="1.8" /></Svg>
        <Sep w="w-[18px]" />
        <Svg s="size-[24px]"><path d="M13 3h11l4 4v17H13z" fill="#f2f2f2" stroke="#c4c4c4" strokeWidth="1.5" /><path d="M5 9h11l5 5v16H5z" fill="#f5f5f5" stroke="#bbb" strokeWidth="1.5" /><path d="M8 16h9M8 20h9M8 24h9" stroke="#c4c4c4" strokeWidth="1.6" /></Svg>
        <span className="ml-[9px]"><Svg s="size-[21px]" vb="0 0 21 21"><path d="M6 7V1h9v6" fill="#e8e8e8" stroke="#bbb" /><rect x="1" y="7" width="19" height="8" rx="2" fill="#c4c4c4" /><path d="M5 12h11v8H5z" fill="#f3f3f3" stroke="#bbb" /><path d="M7 15h7M7 17.5h7" stroke="#bbb" /></Svg></span>
        <Sep w="w-[20px]" />
        <svg viewBox="0 0 9 8" className="ml-[8px] h-[8px] w-[9px]" fill="none"><path d="M1 .5L4 4 1 7.5M5 .5L8 4 5 7.5" stroke="#777" /></svg>
      </div>
      <div className="flex h-[416px] shrink-0 flex-col border border-r-0 border-[#b4b4b4] bg-white">
        <div className="flex h-[28px] shrink-0 items-center border-b border-[#b4b4b4] bg-linear-to-b from-[#fcfcfc] to-[#eee]">
          <span className="flex h-full w-[193px] items-center border-r border-[#c4c4c4] pt-[3px] pl-[2px]">Feature</span><span className="pt-[3px] pl-[3px]">Value</span>
        </div>
        <div className="grow" />
        <HScroll gap="w-[20px]" corner={false} />
      </div>
      <div className="mt-[5px] flex h-[32px] shrink-0 items-center pl-[5px]"><span className="w-[54px] pt-[2px]">Mode</span><Combo cls="h-[32px] w-[233px] pl-[4px] pr-[10px]">Current Layer</Combo></div>
      <div className="mt-[3px] flex h-[32px] shrink-0 items-center pl-[5px] text-[#8c8c8c]">
        <span className="w-[49px] pt-[2px]">View</span>
        <Combo dim cls="h-[32px] w-[103px] pl-[4px] pr-[10px]">Tree</Combo>
        <span className="ml-[74px] text-black"><Btn cls="h-[31px] w-[61px] pt-[2px]">Help</Btn></span>
      </div>
    </div>
  );
}

/* ---------- form controls ---------- */

const ctl = "rounded-[3px] border border-[#a9a9a9] bg-linear-to-b from-white to-[#efefef]";
const Combo = ({ children, cls, dim = false }: Kids & { cls: string; dim?: boolean }) => (
  <div className={`${ctl} ${cls} flex shrink-0 items-center justify-between whitespace-nowrap ${dim ? "opacity-80" : ""}`}>
    <span className="flex items-center pt-[2px]">{children}</span>
    <Down c={dim ? "border-t-[#b4b4b4]" : "border-t-[#5a5a5a]"} />
  </div>
);
const Btn = ({ children, cls }: Kids & { cls: string }) => <div className={`${ctl} ${cls} flex shrink-0 items-center justify-center`}>{children}</div>;
const Spin = ({ children, cls, clear = false }: Kids & { cls: string; clear?: boolean }) => (
  <div className={`${cls} flex shrink-0 items-center rounded-[3px] border border-[#a9a9a9] bg-white`}>
    <span className="grow pt-[2px] pl-[4px] whitespace-nowrap">{children}</span>
    {clear && <span className="pr-[10px]"><ClearX /></span>}
    <span className="flex h-full w-[17px] flex-col items-center justify-evenly border-l border-[#a9a9a9] bg-[#f8f8f8]"><Up /><Down /></span>
  </div>
);
const ColorBtn = ({ fill }: { fill: string }) => (
  <>
    <div className="h-[27px] w-[373px] shrink-0 rounded-[3px] border border-[#a9a9a9] bg-[#f8f8f8] p-[3px_4px]"><div className={`h-full rounded-[3px] ${fill}`} /></div>
    <div className={`${ctl} flex h-[27px] w-[15px] shrink-0 items-center justify-center`}><Down /></div>
  </>
);
const Override = () => (
  <Svg s="h-[20px] w-[27px]" vb="0 0 27 20">
    <path d="M1 10l6-6v12z" fill="#8a8a8a" stroke="#777" /><rect x="6" y="1" width="14" height="17" fill="#fff" stroke="#888" strokeWidth="1.4" />
    <path d="M8.5 5.5h9" stroke="#555" strokeWidth="2" /><path d="M7 9.5h12M8.5 14h7" stroke="#888" strokeWidth="1.4" /><path d="M17 14h10l-5 5z" fill="#4a4a4a" />
  </Svg>
);

/* ---------- layer properties dialog ---------- */

const nav: [string, React.ReactNode][] = [
  ["Information", <Info s="size-[27px]" />],
  ["Source", <Svg s="size-[28px]"><g transform="translate(7 4) scale(.75)"><Gear fill="#ccc" stroke="#999" hole="#7fa5d8" /></g><path d="M1 6l5 3 3-3-3-5c5-1 8 3 6 8l3 3-3 4-4-4C4 13 0 10 1 6z" fill="#e4e4e4" stroke="#444" /><path d="M14 15l4-3 12 13-4 4z" fill="#f0dc94" stroke="#8a7838" /></Svg>],
  ["Symbology", <Brush s="size-[26px]" wood="#a8a58c" />],
  ["Labels", <Tag />],
  ["Masks", <span className="flex h-[17px] w-[29px] items-center justify-center rounded-lg bg-[#eef2fc] pb-px text-[13.5px] font-bold text-[#333]">abc</span>],
  ["3D View", <Svg s="size-[28px]"><path d="M16 1l14 8-14 8L2 9z" fill="#f59090" stroke="#b01c1c" strokeWidth="1.5" /><path d="M2 9l14 8v14L2 23z" fill="#8ade3c" stroke="#4c8a18" strokeWidth="1.5" /><path d="M30 9l-14 8v14l14-8z" fill="#fbea4c" stroke="#b59a10" strokeWidth="1.5" /></Svg>],
  ["Diagrams", <Diagram s="size-[27px]" />],
  ["Fields", <Svg s="size-[28px]"><rect x="2" y="3" width="28" height="27" fill="#dcebfb" stroke="#6c9bd0" strokeWidth="1.6" /><rect x="3" y="4" width="26" height="6" fill="#8ab2e4" /><path d="M17 14h11M17 18h11M17 22h11M17 26h11M4 14h3M4 18h3M4 22h3" stroke="#5b86bd" strokeWidth="1.5" /><rect x="8" y="1" width="8" height="30" fill="#ece6a8" stroke="#f2e24a" strokeWidth="2" /></Svg>],
  ["Attributes\nForm", <Svg s="size-[27px]"><rect x="2" y="3" width="28" height="27" fill="#e4e8ee" stroke="#9db6d6" strokeWidth="2" /><path d="M5 12h6M5 23h6" stroke="#456" strokeWidth="2.5" /><rect x="13" y="8" width="14" height="7" rx="1" fill="#fff" stroke="#6c9bd0" strokeWidth="2" /><rect x="13" y="19" width="14" height="7" rx="1" fill="#fff" stroke="#6c9bd0" strokeWidth="2" /></Svg>],
  ["Joins", <Svg s="size-[28px]"><circle cx="3.5" cy="16" r="3.8" fill="#5f93cf" /><path d="M31 3v26L9 16z" fill="#4f81b8" /></Svg>],
  ["Auxiliary\nStorage", <Svg s="size-[28px]"><path d="M12 1h13l6 6v24H12z" fill="#fff" /><path d="M25 1v6h6" fill="#bbb" /><path d="M1 13v14c0 4 19 4 19 0V13z" fill="#999" /><ellipse cx="10.5" cy="13" rx="9.5" ry="4" fill="#c9c9c9" stroke="#888" /><path d="M1 20c0 4 19 4 19 0" stroke="#ddd" /></Svg>],
  ["Actions", <Svg s="size-[28px]"><g transform="translate(5 -2) scale(.85)"><Gear fill="#ddd" stroke="#aaa" hole="#5f8fc6" /></g><circle cx="18.5" cy="12.5" r="7" fill="#6c9bd0" /><path d="M16 8.5l7 4-7 4z" fill="#fff" /><circle cx="6" cy="27" r="4" fill="#5f8fc6" stroke="#ddd" strokeWidth="2" /></Svg>],
  ["Display", <Svg s="size-[28px]"><path d="M7 2h18q6 0 6 6v6q0 6-6 6h-8l-6 8 1-8H7q-5 0-5-6V8q0-6 5-6z" fill="#ece094" stroke="#cbbd5a" /></Svg>],
  ["Rendering", <Brush s="size-[27px]" wood="#dda04a" patch={false} />],
  ["Temporal", <Clock s="size-[28px]" dark={false} />],
  ["Variables", <Svg s="size-[28px]"><text x="5" y="25" fontSize="42" fill="#653a72" fontFamily="Liberation Serif">ε</text></Svg>],
  ["Metadata", <Svg s="size-[28px]"><path d="M4 2h17l7 7v22H4z" fill="#fff" /><path d="M8 13h15M8 18h15M8 23h15M8 27h8" stroke="#aaa" strokeWidth="1.6" /><path d="M17 19L26 5l5 3-9 14-6 3z" fill="#e0702c" stroke="#7c3a12" /></Svg>],
];

const Label = ({ children }: Kids) => <span className="w-[140px] shrink-0 pt-[2px] whitespace-nowrap">{children}</span>;
const Row = ({ children, cls }: Kids & { cls: string }) => <div className={`flex shrink-0 items-center ${cls}`}>{children}</div>;

function Dialog() {
  return (
    <div className="absolute top-[195px] left-[598px] flex h-[766px] w-[825px] flex-col bg-[#f0f0f0] shadow-[0_2px_22px_rgba(0,0,0,0.42)]">
      <div className="flex h-[37px] shrink-0 items-center bg-white pl-[9px] font-['Open_Sans'] text-[14.6px] tracking-[-0.2px] [font-stretch:normal] [word-spacing:0]">
        <QLogo s="size-[18px]" /><span className="grow pl-[7px]">Layer Properties — global_grid — Symbology</span>
        <svg viewBox="0 0 13 13" className="mr-[14px] size-[13px]"><path d="M.5.5l12 12M12.5.5l-12 12" stroke="#000" strokeWidth="1.1" /></svg>
      </div>
      <div className="flex min-h-0 grow">
        <div className="flex w-[176px] shrink-0 flex-col">
          <div className="flex h-[31px] shrink-0 items-center border border-[#a9a9a9] bg-white pl-[8px]"><SearchIcon /></div>
          <div className="h-[8px] shrink-0 bg-[#5e5e5e]" />
          <div className="flex min-h-0 grow">
            <div className="min-w-0 grow overflow-hidden bg-[#5e5e5e] text-white">
              {nav.map(([t, icon]) => (
                <div key={t} className={`flex items-center ${t.includes("\n") ? "h-[57px]" : "h-[38px]"} ${t === "Symbology" ? "bg-[#f0f0f0] pl-[3px] text-black" : ""}`}>
                  <span className="flex w-[36px] shrink-0 justify-center">{icon}</span><span className={`pl-[3px] leading-[24px] whitespace-pre ${t.includes("\n") ? "" : "pt-[2px]"}`}>{t}</span>
                </div>
              ))}
              <div className="flex pt-1 pl-[16px]"><i className="h-[3px] w-[15px] bg-[#cfd8e4]" /></div>
            </div>
            <VScroll thumb="h-[531px]" after="grow" />
          </div>
        </div>

        <div className="flex w-[649px] shrink-0 flex-col">
          <div className="mt-[3px] ml-[5px] flex shrink-0"><Combo cls="h-[33px] w-[641px] pl-[6px] pr-[10px]">
            <i className="mr-[4px] flex size-[18px] items-center justify-center bg-[#07b353]"><i className="size-[10px] border-[1.5px] border-[#333] bg-[#e6efe9]" /></i>Inverted Polygons
          </Combo></div>
          <Row cls="mt-[17px] h-[32px] pl-[16px]">
            <span className="w-[313px] pt-[2px]">Sub renderer</span>
            <Combo cls="h-[32px] w-[306px] pl-[7px] pr-[9px]">
              <Svg s="size-[18px]" vb="0 0 18 18"><g fill="#07b353" stroke="#0a5a34"><rect x=".5" y=".5" width="13" height="4" /><rect x="3.5" y="7" width="14" height="4" /><rect x=".5" y="13.5" width="13" height="4" /></g></Svg>
              <span className="pl-[3px]">Single Symbol</span>
            </Combo>
          </Row>
          <Row cls="mt-[7px] h-[29px] pl-[16px]"><Check on={false} /><span className="pt-[2px] pl-[6px]">Merge polygons before rendering (slow)</span></Row>
          <div className="mt-[8px] flex h-[168px] shrink-0 pl-[70px]">
            <div className="mt-[54px] size-[61px] bg-white" />
            <div className="ml-[60px] w-[364px] border border-[#b4b4b4] bg-white">
              <div className="flex h-[26px] items-center pl-[8px] font-bold"><Down /><span className="pt-[2px] pl-[33px]">Fill</span></div>
              <div className="flex h-[26px] items-center bg-[#efefef] pl-[53px]"><i className="mr-[6px] size-[17px] bg-[#b2d4f3]" /><span className="pt-[2px]">Simple Fill</span></div>
            </div>
            <div className="mt-[7px] ml-[7px] grid h-[103px] grid-cols-[33px_33px] grid-rows-[27px_27px_27px] gap-x-[7px] gap-y-[11px]">
              <Btn cls="h-[27px]"><Svg s="size-[19px]" vb="0 0 18 18"><path d="M6 .5h6V6h5.500v6H12v5.500H6V12H.5V6H6z" fill="#eef6ee" stroke="#57935c" strokeWidth="1.4" /><path d="M9 3v12M3 9h12" stroke="#57935c" strokeWidth="2.6" /></Svg></Btn>
              <Btn cls="h-[27px] opacity-70"><Svg s="size-[18px]" vb="0 0 18 18"><path d="M9 2l8 13H1z" fill="#d8dcde" stroke="#a4aaad" /></Svg></Btn>
              <Btn cls="h-[27px] opacity-70"><Svg s="size-[18px]" vb="0 0 18 18"><rect x=".5" y="5" width="17" height="7" fill="#f6efef" stroke="#d4c4c4" /><path d="M3 8.5h12" stroke="#e3caca" strokeWidth="2" /></Svg></Btn>
              <Btn cls="h-[27px] opacity-70"><Svg s="size-[18px]" vb="0 0 18 18"><path d="M9 15l8-13H1z" fill="#d8dcde" stroke="#a4aaad" /></Svg></Btn>
              <Btn cls="h-[27px]"><Svg s="size-[19px]" vb="0 0 18 18"><path d="M1 3v14h12" stroke="#777" strokeWidth="2.5" /><rect x="3" y="1" width="14" height="14" fill="#eee" stroke="#777" /><rect x="10.5" y="10" width="7" height="7" rx="1.5" fill="#d2ab1a" /><circle cx="14" cy="13.5" r="1.8" fill="#fff3b8" /></Svg></Btn>
              <Btn cls="h-[27px]"><Svg s="size-[19px]" vb="0 0 18 18"><path d="M5 5q0-4 4-4t4 4v4" stroke="#888" strokeWidth="2.2" /><rect x="2" y="9" width="14" height="9" rx="1" fill="#f2d91e" stroke="#bd9d00" /></Svg></Btn>
            </div>
          </div>
          <div className="mt-[7px] ml-[16px] h-px w-[619px] shrink-0 bg-[#a0a0a0]" />
          <div className="mt-[9px] flex h-[324px] shrink-0">
            <div className="flex w-[618px] shrink-0 flex-col overflow-hidden">
              <Row cls="mt-px h-[32px] pl-[17px]"><span className="w-[160px] pt-[2px] whitespace-nowrap">Symbol layer type</span><Combo cls="h-[32px] w-[429px] pl-[3px] pr-[9px]">Simple Fill</Combo></Row>
              <Row cls="mt-[15px] h-[27px] pl-[28px]"><Label>Fill color</Label><ColorBtn fill="bg-white" /><span className="pl-[9px]"><Override /></span></Row>
              <Row cls="mt-[7px] h-[32px] pl-[28px]"><Label>Fill style</Label><Combo cls="h-[32px] w-[388px] pl-[5px] pr-[9px]"><i className="mr-[3px] h-[17px] w-[34px] bg-[#646464]" />Solid</Combo><span className="pl-[9px]"><Override /></span></Row>
              <Row cls="mt-[8px] h-[27px] pl-[28px]"><Label>Stroke color</Label><ColorBtn fill="bg-[#6a6a6a]" /><span className="pl-[9px]"><Override /></span></Row>
              <Row cls="mt-[7px] h-[32px] pl-[28px]"><Label>Stroke width</Label><Spin clear cls="h-[30px] w-[212px]">0.200000</Spin><span className="ml-[7px]"><Combo cls="h-[32px] w-[169px] pl-[4px] pr-[9px]">Millimeters</Combo></span><span className="pl-[9px]"><Override /></span></Row>
              <Row cls="mt-[7px] h-[32px] pl-[28px]"><Label>Stroke style</Label><Combo cls="h-[32px] w-[388px] pl-[42px] pr-[9px]">No Pen</Combo><span className="pl-[9px]"><Override /></span></Row>
              <Row cls="mt-[7px] h-[32px] pl-[28px]"><Label>Join style</Label><Combo cls="h-[32px] w-[388px] pl-[5px] pr-[9px]">
                <Svg s="size-[18px]" vb="0 0 18 18"><path d="M0 1h11l6 6v11h-7v-7H0z" fill="#6b8fc0" stroke="#222" /><path d="M1 6h11M13.5 8v9" stroke="#e9d94a" strokeWidth="2" strokeDasharray="2 2.5" /></Svg><span className="pl-[5px]">Bevel</span></Combo><span className="pl-[9px]"><Override /></span></Row>
              <Row cls="mt-[8px] h-[56px] pl-[28px]">
                <span className="w-[122px] pt-[2px]">Offset</span>
                <span className="flex h-full w-[18px] shrink-0 flex-col"><span className="flex h-[24px] items-center pt-[2px]">x</span><span className="mt-[8px] flex h-[24px] shrink-0 items-center pt-[2px]">y</span></span>
                <span className="flex h-full shrink-0 flex-col gap-[8px]"><Spin cls="h-[24px] w-[212px]">0.000000</Spin><Spin cls="h-[24px] w-[212px]">0.000000</Spin></span>
                <span className="ml-[7px]"><Combo cls="h-[32px] w-[169px] pl-[4px] pr-[9px]">Millimeters</Combo></span><span className="pl-[9px]"><Override /></span>
              </Row>
            </div>
            <VScroll thumb="h-[243px]" after="grow" />
          </div>
          <Row cls="mt-[24px] h-[30px] pl-[10px] font-bold"><Right big /><span className="pt-[2px] pl-[11px]">Layer Rendering</span></Row>
          <div className="mt-[2px] ml-[5px] flex h-[33px] shrink-0">
            <div className={`${ctl} flex w-[80px] items-center justify-between pr-[4px] pl-[9px]`}><span className="pt-[2px]">Style</span><Down /></div>
            <div className="ml-[220px] flex gap-[7px]">
              <div className="flex w-[80px] items-center justify-center rounded-[3px] border border-[#419ceb] bg-linear-to-b from-white to-[#e3e9ef] pt-[2px]">OK</div>
              <Btn cls="w-[80px] pt-[2px]">Cancel</Btn><Btn cls="w-[80px] pt-[2px]">Apply</Btn><Btn cls="w-[80px] pt-[2px]">Help</Btn>
            </div>
          </div>
        </div>
      </div>
      <div className="absolute top-[32px] left-[171px] h-[43px] w-[657px] border-[5px] border-[#ed1c24]" />
      <div className="absolute top-[192px] left-[365px] h-[31px] w-[369px] border-[5px] border-[#ed1c24]" />
      <div className="absolute top-[394px] left-[185px] h-[35px] w-[553px] border-[5px] border-[#ed1c24]" />
      <div className="absolute top-[546px] left-[197px] h-[35px] w-[541px] border-[5px] border-[#ed1c24]" />
    </div>
  );
}

/* ---------- map: Winkel tripel graticule at 10 degree steps ---------- */

function project(lon: number, lat: number): string {
  const l = (lon * Math.PI) / 180;
  const p = (lat * Math.PI) / 180;
  const a = Math.acos(Math.cos(p) * Math.cos(l / 2));
  const sinc = a === 0 ? 1 : Math.sin(a) / a;
  const x = 0.5 * ((l * 2) / Math.PI + (2 * Math.cos(p) * Math.sin(l / 2)) / sinc);
  const y = 0.5 * (p + Math.sin(p) / sinc);
  return `${(999 + 229.9 * x).toFixed(1)} ${(624.5 - 229.9 * y).toFixed(1)}`;
}
const steps = (from: number, to: number) => Array.from({ length: Math.abs(to - from) / 10 + 1 }, (_, i) => from + Math.sign(to - from) * i * 10);
const meridians = steps(-180, 180).map((lon) => "M" + steps(-90, 90).map((lat) => project(lon, lat)).join("L")).join("");
const parallels = steps(-90, 90).map((lat) => "M" + steps(-180, 180).map((lon) => project(lon, lat)).join("L")).join("");
const outline = "M" + [...steps(-90, 90).map((lat) => project(-180, lat)), ...steps(90, -90).map((lat) => project(180, lat))].join("L") + "Z";

function MapCanvas() {
  return (
    <svg viewBox="379 199 1236 792" className="h-full w-full" fill="none">
      <defs>
        <linearGradient id="sea" x1="0" y1="0" x2="0" y2="1"><stop offset="0" stopColor="#2fbdd6" /><stop offset=".3" stopColor="#57d6e2" /><stop offset=".5" stopColor="#3cc3db" /><stop offset=".8" stopColor="#5cdce2" /><stop offset="1" stopColor="#35bedc" /></linearGradient>
        <filter id="soft" x="-30%" y="-50%" width="160%" height="200%"><feGaussianBlur stdDeviation="7" /></filter>
        <filter id="wash" x="-5%" y="-5%" width="110%" height="110%"><feGaussianBlur stdDeviation="2.5" /></filter>
        <filter id="edge"><feTurbulence type="fractalNoise" baseFrequency="0.08" numOctaves="4" seed="4" /><feDisplacementMap in="SourceGraphic" scale="14" xChannelSelector="R" yChannelSelector="G" /></filter>
        <filter id="grain" x="0" y="0" width="100%" height="100%"><feTurbulence type="fractalNoise" baseFrequency="0.35 0.45" numOctaves="3" seed="8" /><feColorMatrix values="0 0 0 0 0  0 0 0 0 .2  0 0 0 0 .25  .9 0 0 0 -.33" /></filter>
        <clipPath id="frame"><rect x="409" y="273" width="1178" height="703" /></clipPath>
      </defs>
      <g clipPath="url(#frame)">
        <rect x="409" y="273" width="1178" height="703" fill="url(#sea)" />
        <g filter="url(#soft)">
          <path d="M400 410q60-14 120-50l70-14v14q-80 26-190 70z" fill="#129fc9" opacity=".7" />
          <path d="M400 500l50-30-10 60-40 50z" fill="#7de9ea" opacity=".6" />
          <path d="M400 650l20 30 60 120 110 110v10q-60-20-110-70l-80-90z" fill="#1ca8d8" opacity=".3" />
          <path d="M400 860q100 20 190 70l-40 5q-80-40-150-44z" fill="#8aeeeb" opacity=".8" />
          <path d="M1423 920q80-20 174-50v20q-80 30-174 50z" fill="#8aeeeb" opacity=".8" />
          <path d="M1423 966l90-8 74-26v20l-90 20z" fill="#0c8ee0" opacity=".75" />
          <path d="M1490 355l107 60v20l-60-20z" fill="#1fa9cc" opacity=".4" />
          <path d="M1560 560l37-20v200l-30 10z" fill="#25aad0" opacity=".45" />
        </g>
        <g filter="url(#wash)">
          <path d="M405 915l40 12 30 8 40 14-30 2-40-12-40-12z" fill="#0a72de" opacity=".7" />
          <path d="M1510 950l40-9 26-8-24 14-42 9z" fill="#0a56d8" opacity=".8" />
          <path d="M430 690l20 70 40 60-30-20-30-60z" fill="#1494cc" opacity=".35" />
        </g>
        <g filter="url(#edge)" stroke="#fff" strokeWidth="1.6">
          <path d="M400 395L425 384 453 375 482 360 490 346 519 338 545 346 564 346 610 338V264L560 284 520 276 470 286 400 290z" fill="#ecd0b8" />
          <path d="M488 373l25-16 30-8 50-6-20 10-30 8-30 12z" fill="#e8cbb2" />
          <path d="M412 400l20-10 26-4-14 8-26 12z" fill="#f4ece0" />
          <path d="M1410 344l40 5 3-11 50 0 40 16 56 24V306l-56-14-80-12-60-2z" fill="#e9c8ad" />
          <path d="M1450 334l16 12 8 20 4-14 -8-12z" fill="#f6e9da" />
          <path d="M457 806l20 8 8 8-4 4-12-10zM482 828l10 2 10 28-8-2-10-16z" fill="#e9c8ad" />
          <path d="M419 847l16 4 4 8-12-4z" fill="#e9c8ad" />
          <path d="M532 970l14-22 30-8 30 6 20 10 60 24v4H540z" fill="#e6c6aa" />
          <path d="M1250 980l60-6 60-6 50 8 20 10h-190z" fill="#d7b294" />
          <path d="M1542 964l30-14 24-6v8l-30 6z" fill="#f1dcc4" strokeWidth="1" />
        </g>
        <circle cx="419" cy="713" r="2.500" fill="#fff" /><circle cx="415" cy="723" r="1.500" fill="#fff" />
        <g filter="url(#wash)">
          <path d="M465 306l50-13 45-5-40 12-50 8zM480 298l60-14-30 12z" fill="#e8794a" opacity=".7" />
          <path d="M430 315l60-12 70-4-70 12-60 10z" fill="#e5a27c" opacity=".6" />
          <path d="M1455 278l40 6 50 3-50 2zM1480 286l50 8-30 0z" fill="#e5713c" opacity=".8" />
          <path d="M1510 316l77 14v14l-50-14z" fill="#c99a7c" opacity=".5" />
          <path d="M409 330l70-16-20 24-50 16z" fill="#d9b496" opacity=".5" />
        </g>
        <g filter="url(#edge)"><path d="M409 286l60-6M500 278l50 5 48-10M1423 282l50 6 40 14 40 6M1500 280l60 12 40 6" stroke="#15a9cc" strokeWidth="4" /><path d="M409 276h190M1423 276h174M409 980h130M1500 980h97" stroke="#fff" strokeWidth="3" strokeDasharray="9 5" /></g>
        <rect x="409" y="273" width="1178" height="703" filter="url(#grain)" opacity=".35" />
      </g>
      <circle cx="1571" cy="716" r="3" fill="#e5704a" stroke="#333" />
      <path d={outline} fill="#4f1283" />
      <path d={meridians + parallels} stroke="#6b6b6b" strokeWidth="1.1" />
    </svg>
  );
}

/* ---------- page ---------- */

const menu: [string, number, string][] = [
  ["Project", 3, "w-[77px]"], ["Edit", 0, "w-[49px]"], ["View", 0, "w-[58px]"], ["Layer", 0, "w-[64px]"], ["Settings", 0, "w-[87px]"],
  ["Plugins", 0, "w-[78px]"], ["Vector", 4, "w-[72px]"], ["Raster", 0, "w-[71px]"], ["Database", 0, "w-[100px]"], ["Web", 0, "w-[55px]"],
  ["Mesh", 0, "w-[61px]"], ["Processing", 3, "w-[109px]"], ["Help", 0, "w-[60px]"],
];

export default function App() {
  return (
    <div className="relative flex h-[1030px] w-[1918px] flex-col overflow-hidden bg-[#f0f0f0] font-['DejaVu_Sans_Condensed','DejaVu_Sans',sans-serif] text-[19.5px] leading-none tracking-[0.1px] text-black [font-stretch:condensed] [word-spacing:1px]">
      <div className="flex h-[29px] shrink-0 items-center bg-white pl-[2px] font-['Open_Sans'] text-[14.6px] tracking-[-0.2px] text-[#8a8a8a] [font-stretch:normal] [word-spacing:0]">
        <QLogo s="size-[20px]" /><span className="grow pl-[5px]">*WHS_vector styling — QGIS [kevelyn]</span>
        <svg viewBox="0 0 130 14" className="mr-[24px] h-[14px] w-[130px]" fill="none" stroke="#8a8a8a"><path d="M1 7.5h12M118 1l12 12M130 1l-12 12" /><path d="M59.5 4.5h8v8h-8zM62 4V1.5h8.5V10H68" /></svg>
      </div>
      <div className="flex h-[29px] shrink-0 items-center border-b border-[#d4d4d4] pt-[2px] pl-[11px] text-[#929292]">
        {menu.map(([t, i, w]) => (
          <span key={t} className={`${w} shrink-0`}>{t.slice(0, i)}<span className="underline decoration-1 underline-offset-[3px]">{t[i]}</span>{t.slice(i + 1)}</span>
        ))}
      </div>
      <div className={`${bar} h-[47px]`}>
        <Handle w="w-[14px]" />
        {[ic.newFile, ic.open, ic.save, ic.layout, ic.wrenchDoc, ic.styleMgr].map((x, i) => <Ico key={i}>{x}</Ico>)}
        <Handle w="w-[19px]" />
        {[ic.hand, ic.panSel, ic.zoomIn, ic.zoomOut, ic.zoomFull, ic.zoomSel, ic.zoomLayer, ic.zoom11, ic.zoomPrev, ic.zoomNext, ic.newMap, ic.new3d, ic.bookmarkNew, ic.bookmarks, ic.clock, ic.refresh].map((x, i) => <Ico key={i}>{x}</Ico>)}
        <Handle w="w-[17px]" />
        <Ico on>{ic.identify}</Ico><Ico>{ic.table}</Ico><Ico>{ic.calc}</Ico><Ico on>{ic.gear}</Ico><Ico>{ic.sigma}</Ico><Ico>{ic.measure}</Ico>
        <Drop /><Ico>{ic.tips}</Ico><Ico>{ic.gearOff}</Ico><Drop c="border-t-[#a4a4a4]" /><Ico>{ic.textAnn}</Ico><Drop w="w-[17px]" />
      </div>
      <div className={`${bar} h-[47px]`}>
        <Handle w="w-[14px]" />
        {[ic.dsm, ic.gpkg, ic.shp, ic.feather, ic.chip].map((x, i) => <Ico key={i}>{x}</Ico>)}
        <Sep w="w-[8px]" /><Ico>{ic.mesh}</Ico><Sep w="w-[8px]" /><Handle w="w-[18px]" />
        {[ic.pencils, ic.pencil, ic.saveOff, ic.polyOff, ic.vertexOff].map((x, i) => <Ico key={i}>{x}</Ico>)}
        <Drop c="border-t-[#999]" />
        {[ic.multiOff, ic.trash, ic.cut, ic.copy, ic.paste, ic.undo, ic.redo].map((x, i) => <Ico key={i}>{x}</Ico>)}
        <Handle w="w-[17px]" /><Ico>{ic.tag}</Ico><Ico>{ic.diagram}</Ico><Sep w="w-[9px]" /><Ico>{ic.tagPin}</Ico><Ico>{ic.tagRed}</Ico><Sep w="w-[7px]" />
        {[0, 1, 2, 3, 4].map((k) => <Ico key={k}><GrayTag kind={k} /></Ico>)}
        <Handle w="w-[20px]" /><Ico>{ic.metasearch}</Ico><Handle w="w-[18px]" /><Ico><Python s="size-[28px]" prompt /></Ico><Handle w="w-[18px]" /><Ico>{ic.help}</Ico>
      </div>
      <div className={`${bar} h-[46px]`}>
        <Handle w="w-[14px]" />
        <Ico>{ic.select}</Ico><Drop w="w-[15px]" /><Ico>{ic.selExpr}</Ico><Drop w="w-[15px]" /><Ico>{ic.deselect}</Ico><Drop w="w-[15px]" /><Ico>{ic.selLoc}</Ico>
      </div>

      <div className="flex h-[794px] shrink-0">
        <LeftDock />
        <div className="flex w-[7px] shrink-0 items-center justify-center"><div className="h-[18px] w-[3px] bg-[radial-gradient(circle,#b5b5b5_0.8px,transparent_1px)] bg-[size:3px_3px]" /></div>
        <div className="w-[1238px] shrink-0 border border-[#b4b4b4] bg-white"><MapCanvas /></div>
        <div className="w-[7px] shrink-0" />
        <RightDock />
      </div>

      <div className="flex h-[38px] shrink-0 items-center pt-[2px] whitespace-nowrap">
        <div className="ml-[4px] flex h-[32px] w-[232px] shrink-0 items-center rounded-[3px] border border-[#a9a9a9] bg-white pl-[8px] text-[#8c8c8c]"><SearchIcon /><span className="pt-[2px] pl-[8px]">Type to locate (Ctrl...</span></div>
        <span className="w-[470px] shrink-0 pt-[2px] pl-[9px]">1 legend entries removed.</span>
        <span className="w-[101px] shrink-0 pt-[2px]">Coordinate</span>
        <div className="flex h-[32px] w-[200px] shrink-0 items-center rounded-[3px] border border-[#a9a9a9] bg-white pt-[2px] pl-[5px] tracking-normal">-17126740,-6697406</div>
        <span className="w-[37px] shrink-0 pl-[4px]"><Svg s="size-[20px]" vb="0 0 20 20"><path d="M1 4l4-3h3l6 9-5 4-6-4z" fill="#222" /><path d="M4 2l6 9M8 2l4 7" stroke="#eee" strokeWidth="1.2" /><circle cx="13" cy="14" r="4.5" fill="#fff" stroke="#222" strokeWidth="2" /><circle cx="13" cy="14" r="1.500" fill="#222" /><path d="M12 4l6-3M0 13l4 2M17 8l2-4" stroke="#333" strokeDasharray="2 1.5" /></Svg></span>
        <span className="w-[50px] shrink-0 pt-[2px]">Scale</span>
        <div className="flex h-[32px] w-[127px] shrink-0 items-center rounded-[3px] border border-[#a9a9a9] bg-linear-to-r from-white from-80% to-[#f4f4f4] to-80% tracking-normal"><span className="grow pt-[2px]">131045968</span><span className="pr-[9px]"><Down /></span></div>
        <span className="flex w-[37px] shrink-0 pl-[12px]"><Svg s="h-[20px] w-[17px]" vb="0 0 17 20"><path d="M3.5 10V6q0-5 5-5t5 5v4" stroke="#888" strokeWidth="2" /><rect x="1" y="9" width="15" height="10" rx="1" fill="#5c5c5c" /></Svg></span>
        <span className="w-[85px] shrink-0 pt-[2px]">Magnifier</span>
        <Spin cls="h-[31px] w-[94px]">100%</Spin>
        <span className="w-[93px] shrink-0 pt-[2px] pl-[9px]">Rotation</span>
        <Spin cls="h-[31px] w-[102px]">0.0 °</Spin>
        <span className="ml-[6px]"><Check /></span><span className="w-[86px] shrink-0 pt-[2px] pl-[7px]">Render</span>
        <Globe s="size-[19px]" fill="#ddd" stroke="#666" /><span className="w-[132px] shrink-0 pt-[2px] pl-[5px]">ESRI:54042</span>
        <Svg s="size-[20px]" vb="0 0 20 20"><path d="M10 1c12 0 12 14 2 14l5 5-9-5C-3 14-2 1 10 1z" fill="#5c5c5c" /><circle cx="5.5" cy="8" r="1.5" fill="#fff" /><circle cx="10" cy="8" r="1.5" fill="#fff" /><circle cx="14.5" cy="8" r="1.5" fill="#fff" /></Svg>
      </div>
      <Dialog />
    </div>
  );
}
